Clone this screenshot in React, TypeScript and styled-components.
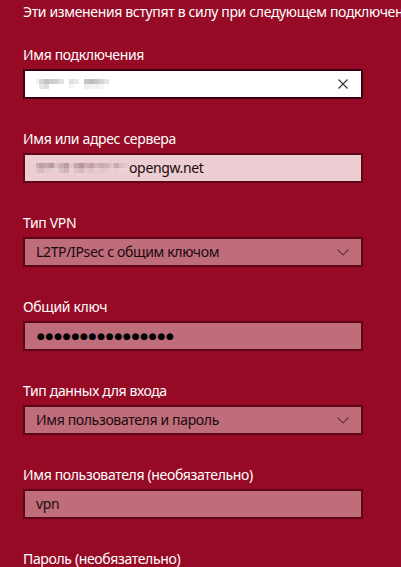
import React from "react";
import styled, { createGlobalStyle } from "styled-components";

const Global = createGlobalStyle`
  html, body { margin: 0; padding: 0; background: #960a25; }
  body { font-family: "Noto Sans", "Open Sans", sans-serif; overflow: hidden; }
`;

const Page = styled.div`
  width: 401px;
  height: 567px;
  overflow: hidden;
  background: #960a25;
  padding: 2px 0 0 23px;
  box-sizing: border-box;
`;

const Notice = styled.div`
  color: #ffffff;
  font-size: 14px;
  letter-spacing: -0.35px;
  line-height: 20px;
  white-space: nowrap;
  margin-bottom: 23px;
`;

const Field = styled.div`
  display: flex;
  flex-direction: column;
  margin-bottom: 30px;
`;

const Label = styled.div`
  color: #ffffff;
  font-size: 14px;
  letter-spacing: -0.35px;
  line-height: 20px;
  margin-bottom: 4px;
  white-space: nowrap;
`;

const Box = styled.div<{ $variant: "active" | "light" | "muted" }>`
  width: 340px;
  height: 30px;
  box-sizing: border-box;
  display: flex;
  align-items: center;
  padding: 0 10px 0 11px;
  border: 2px solid ${(p) => (p.$variant === "active" ? "#3e0010" : "#5e0618")};
  background: ${(p) =>
    p.$variant === "active" ? "#ffffff" : p.$variant === "light" ? "#ebcdd2" : "#bf6c7b"};
  color: #1b0a0d;
  font-size: 14px;
  letter-spacing: -0.35px;
  line-height: 20px;
`;

const Value = styled.span`
  flex: 1;
  white-space: nowrap;
  overflow: hidden;
  display: flex;
  align-items: center;
`;

const Redacted = styled.span`
  display: inline-grid;
  grid-auto-flow: column;
  grid-template-rows: 5px 5px;
  margin-left: -2px;
`;

const Pixel = styled.span<{ $c: string }>`
  display: block;
  width: 5px;
  height: 5px;
  background: ${(p) => p.$c};
`;

const Dots = styled.span`
  font-family: "DejaVu Sans", sans-serif;
  font-size: 9px;
  letter-spacing: 0.75px;
  color: #000;
  margin-left: 1px;
`;

const IconSlot = styled.span`
  display: flex;
  align-items: center;
  justify-content: center;
  width: 16px;
  height: 16px;
`;

const ClearIcon = () => (
  <IconSlot>
    <svg width="10" height="10" viewBox="0 0 10 10">
      <path d="M0.5 0.5 L9.5 9.5 M9.5 0.5 L0.5 9.5" stroke="#333" strokeWidth="1.1" fill="none" />
    </svg>
  </IconSlot>
);

const ChevronIcon = () => (
  <IconSlot>
    <svg width="12" height="7" viewBox="0 0 12 7">
      <path d="M0.5 0.5 L6 6 L11.5 0.5" stroke="#6e2c38" strokeWidth="1.1" fill="none" />
    </svg>
  </IconSlot>
);

// pairs of (top, bottom) pixel colours, one column each
const blurA: [string, string][] = [
  ["#f4f4f4", "#ffffff"], ["#d6d6d6", "#e6e6e6"], ["#c4c4c4", "#dcdcdc"], ["#cbcbcb", "#ffffff"],
  ["#d2d2d2", "#ffffff"], ["#e2e2e2", "#ffffff"], ["#ffffff", "#ffffff"], ["#e0e0e0", "#f4f4f4"],
  ["#e8e8e8", "#ffffff"], ["#ffffff", "#ffffff"], ["#c6c6c6", "#f0f0f0"], ["#bdbdbd", "#f2f2f2"],
  ["#c8c8c8", "#f2f2f2"], ["#d6d6d6", "#f6f6f6"], ["#e4e4e4", "#ffffff"],
];
const blurB: [string, string][] = [
  ["#c9aeb3", "#ddc4c8"], ["#bca0a6", "#d4babe"], ["#c3a8ad", "#e0c7cb"], ["#b69aa0", "#e4cbcf"],
  ["#d9c0c4", "#e8cfd3"], ["#c7abb0", "#d8bfc3"], ["#b99ca2", "#cfb4b9"], ["#dec5c9", "#e8cfd3"],
  ["#c3a5ab", "#dcc2c6"], ["#b4969c", "#d2b7bc"], ["#cbaeb3", "#e2c9cd"], ["#bfa1a7", "#ddc3c7"],
  ["#d2b6bb", "#e6cdd1"], ["#c8abb0", "#e1c7cb"], ["#cfb2b7", "#e3cacd"], ["#dac1c5", "#e8cfd3"],
  ["#c6a9ae", "#e6cdd1"], ["#d8bfc3", "#ebd0d4"], ["#e2c9cd", "#ebd0d4"],
];

const Blur = ({ cells }: { cells: [string, string][] }) => (
  <Redacted>
    {cells.flatMap(([a, b], i) => [<Pixel key={`a${i}`} $c={a} />, <Pixel key={`b${i}`} $c={b} />])}
  </Redacted>
);

export default function App() {
  return (
    <Page>
      <Global />
      <Notice>Эти изменения вступят в силу при следующем подключении.</Notice>

      <Field>
        <Label>Имя подключения</Label>
        <Box $variant="active">
          <Value>
            <Blur cells={blurA} />
          </Value>
          <ClearIcon />
        </Box>
      </Field>

      <Field>
        <Label>Имя или адрес сервера</Label>
        <Box $variant="light">
          <Value>
            <Blur cells={blurB} />
            opengw.net
          </Value>
        </Box>
      </Field>

      <Field>
        <Label>Тип VPN</Label>
        <Box $variant="muted">
          <Value>L2TP/IPsec с общим ключом</Value>
          <ChevronIcon />
        </Box>
      </Field>

      <Field>
        <Label>Общий ключ</Label>
        <Box $variant="muted">
          <Value>
            <Dots>●●●●●●●●●●●●●●●●</Dots>
          </Value>
        </Box>
      </Field>

      <Field>
        <Label>Тип данных для входа</Label>
        <Box $variant="muted">
          <Value>Имя пользователя и пароль</Value>
          <ChevronIcon />
        </Box>
      </Field>

      <Field>
        <Label>Имя пользователя (необязательно)</Label>
        <Box $variant="muted">
          <Value>vpn</Value>
        </Box>
      </Field>

      <Field>
        <Label>Пароль (необязательно)</Label>
      </Field>
    </Page>
  );
}
